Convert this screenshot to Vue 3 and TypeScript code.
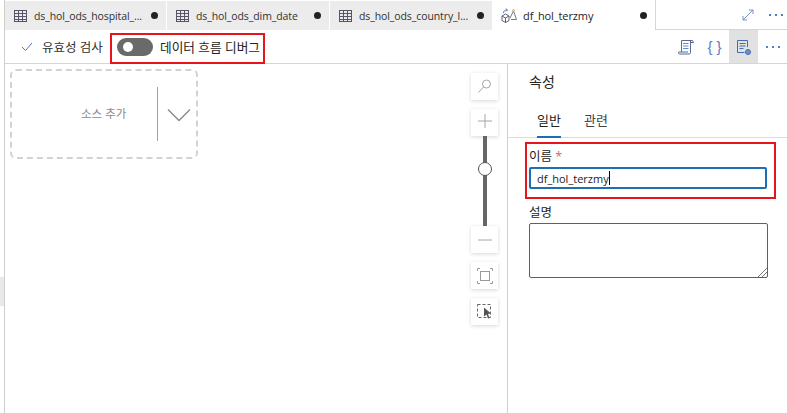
<script setup lang="ts">
const tabs = [
  { name: 'ds_hol_ods_hospital_...' },
  { name: 'ds_hol_ods_dim_date' },
  { name: 'ds_hol_ods_country_l...' },
]
</script>

<template>
  <div class="page">
    <div class="rail"><div class="rail-patch"></div></div>
    <div class="main">
      <div class="tabbar">
        <div v-for="t in tabs" :key="t.name" class="tab">
          <svg class="tab-ico" width="16" height="14" viewBox="0 0 16 14" fill="none" stroke="#55556a" stroke-width="1">
            <rect x="1.5" y="1.5" width="12" height="11" />
            <path d="M1.5 4.5h12M1.5 7.5h12M1.5 10.5h12M5.5 1.5v11M9.5 1.5v11" />
          </svg>
          <span class="tab-name">{{ t.name }}</span>
          <span class="dot"></span>
        </div>
        <div class="tab tab-active">
          <svg class="flow-ico" width="16" height="15" viewBox="0 0 16 15" fill="none" stroke="#5f5f6b" stroke-width="1">
            <path d="M1 8l3.500-2L8 8v4.500L4.500 14.500 1 12.500zM1 8l3.500 2L8 8M4.500 10v4.500" />
            <path d="M10 11.500h5.500L12.500 3 9 10" stroke="#6f7a8c" />
            <circle cx="12.500" cy="2.500" r="1" stroke="#c9a05a" />
            <path d="M2.500 5C2.500 3 4 2 6 2M5 .5L6.500 2 5 3.500" stroke="#4a78b8" />
          </svg>
          <span class="tab-name active-name">df_hol_terzmy</span>
          <span class="dot"></span>
        </div>
        <div class="tab-tools">
          <svg width="12" height="12" viewBox="0 0 12 12" fill="none" stroke="#7d8fc4" stroke-width="1">
            <path d="M1 11L11 1M7 1h4v4M1 7v4h4" />
          </svg>
          <span class="more">
            <i></i><i></i><i></i>
          </span>
        </div>
      </div>

      <div class="toolbar">
        <div class="validate">
          <svg width="12" height="10" viewBox="0 0 12 10" fill="none" stroke="#5470b4" stroke-width="1">
            <path d="M1 5l3.500 3.500L11 1" />
          </svg>
          <span>유효성 검사</span>
        </div>
        <div class="debug-box">
          <span class="switch"><span class="knob"></span></span>
          <span>데이터 흐름 디버그</span>
        </div>
        <div class="tool-right">
          <span class="tool">
            <svg width="16" height="16" viewBox="0 0 16 16" fill="none" stroke="#5a6b94" stroke-width="1">
              <path d="M3.500 13V1.500h11l1 2h-3" />
              <path d="M12.500 1.500V13.500a1.500 1.500 0 0 1-1.500 1.500H1.500c-.8 0-1.200-.8-1-2h9.500" />
              <path d="M5 4.500h5.500M5 7h5.500M5 9.500h5.500" stroke="#5b8fd0" />
            </svg>
          </span>
          <span class="tool braces">{ }</span>
          <span class="tool tool-on">
            <svg width="18" height="18" viewBox="0 0 18 18" fill="none" stroke="#3f6fb0" stroke-width="1">
              <path d="M12.500 9V2.500h-10v12h7" />
              <path d="M4.500 5.500h6M4.500 8h6M4.500 10.500h4" />
              <circle cx="13" cy="14" r="2.500" fill="#6d93c4" />
            </svg>
          </span>
          <span class="tool">
            <span class="more"><i></i><i></i><i></i></span>
          </span>
        </div>
      </div>

      <div class="content">
        <div class="canvas">
          <div class="source">
            <span class="source-label">소스 추가</span>
            <span class="source-sep"></span>
            <svg class="source-chev" width="24" height="14" viewBox="0 0 24 14" fill="none" stroke="#8a8a8a" stroke-width="1.400">
              <path d="M1 1.500l11 11 11-11" />
            </svg>
          </div>

          <div class="zoom">
            <span class="zbtn zbtn-search">
              <svg width="16" height="16" viewBox="0 0 16 16" fill="none" stroke="#a6a6a6" stroke-width="1">
                <circle cx="9.500" cy="6" r="4" />
                <path d="M6.500 9L1.500 14.500" />
              </svg>
            </span>
            <span class="zbtn zbtn-plus">
              <svg width="16" height="16" viewBox="0 0 16 16" fill="none" stroke="#a6a6a6" stroke-width="1">
                <path d="M1 8h14M8 1v14" />
              </svg>
            </span>
            <div class="track">
              <span class="thumb"></span>
            </div>
            <span class="zbtn">
              <svg width="16" height="16" viewBox="0 0 16 16" fill="none" stroke="#a6a6a6" stroke-width="1">
                <path d="M1 8h14" />
              </svg>
            </span>
            <span class="zbtn zbtn-gap">
              <svg width="16" height="16" viewBox="0 0 16 16" fill="none" stroke="#9a9a9a" stroke-width="1">
                <rect x="3.500" y="3.500" width="9" height="9" />
                <path d="M.5 3V.5H3M13 .5h2.500V3M15.500 13v2.500H13M3 15.500H.5V13" />
              </svg>
            </span>
            <span class="zbtn zbtn-gap">
              <svg width="16" height="16" viewBox="0 0 16 16" fill="none">
                <rect x=".5" y=".5" width="13" height="13" stroke="#666" stroke-dasharray="3 2" />
                <path d="M7 3.500l7 6-3 .5 1.500 4-1.500.5-1.500-4-2.500 2z" fill="#555" />
              </svg>
            </span>
          </div>
        </div>

        <aside class="panel">
          <h2 class="panel-title">속성</h2>
          <div class="panel-tabs">
            <span class="ptab ptab-on">일반</span>
            <span class="ptab">관련</span>
          </div>
          <div class="name-box">
            <label class="field-label">이름 <em>*</em></label>
            <div class="input"><span>df_hol_terzmy</span><i class="caret"></i></div>
          </div>
          <div class="desc">
            <label class="field-label">설명</label>
            <div class="textarea">
              <svg class="grip" width="9" height="9" viewBox="0 0 9 9" fill="none" stroke="#777" stroke-width="1">
                <path d="M0 9L9 0M4 9l5-5" />
              </svg>
            </div>
          </div>
        </aside>
      </div>
    </div>
  </div>
</template>

<style>
html, body { margin: 0; background: #fff; overflow: hidden; }
</style>

<style scoped>
.page {
  display: flex;
  width: 787px;
  height: 413px;
  overflow: hidden;
  background: #fff;
  color: #323130;
  font-family: "Open Sans", "Noto Sans CJK KR", sans-serif;
  font-size: 10.500px;
}
.rail {
  width: 4px;
  flex: none;
  border-right: 1px solid #cfcfcf;
  padding-top: 277px;
  box-sizing: content-box;
}
.rail-patch { height: 29px; background: #e8e8e8; }
.main { flex: 1; display: flex; flex-direction: column; min-width: 0; }

.tabbar { display: flex; height: 30px; flex: none; background: #fff; }
.tab {
  width: 162px;
  flex: none;
  height: 29px;
  margin-top: 1px;
  box-sizing: border-box;
  padding: 0 8px 0 8px;
  display: flex;
  align-items: center;
  background: #ececec;
  border-right: 1px solid #fff;
}
.tab + .tab { width: 163px; }
.tab-ico { flex: none; margin-right: 5px; }
.tab-name { flex: 1; white-space: nowrap; overflow: hidden; letter-spacing: -0.1px; }
.active-name { color: #252423; font-size: 11px; }
.dot { width: 7px; height: 7px; border-radius: 50%; background: #1f2228; flex: none; }
.tab-active {
  width: 163px;
  margin-top: 0;
  height: 30px;
  background: #fff;
  border-right: 1px solid #d6d6d6;
  padding: 0 8px 0 8px;
}
.flow-ico { flex: none; margin-right: 6px; }
.tab-tools {
  flex: 1;
  display: flex;
  align-items: center;
  justify-content: flex-end;
  gap: 15px;
  padding-right: 4px;
  border-bottom: 1px solid #d6d6d6;
  height: 29px;
  margin-top: 1px;
  box-sizing: border-box;
}
.more { display: inline-flex; gap: 4px; }
.more i { width: 2px; height: 2px; background: #4d7fc4; display: block; }

.toolbar {
  display: flex;
  align-items: flex-start;
  height: 34px;
  flex: none;
  box-sizing: border-box;
  border-bottom: 1px solid #d6d6d6;
}
.validate {
  display: flex;
  align-items: center;
  gap: 9px;
  padding-left: 16px;
  width: 105px;
  height: 33px;
  box-sizing: border-box;
  font-size: 12.500px;
}
.debug-box {
  display: flex;
  align-items: center;
  gap: 7px;
  width: 155px;
  height: 31px;
  margin-top: 3px;
  box-sizing: border-box;
  border: 2px solid #e8141c;
  padding: 0 0 4px 5px;
  font-size: 12.700px;
  color: #252423;
}
.switch {
  width: 36px;
  height: 18px;
  border-radius: 9px;
  background: #6a6a6a;
  flex: none;
  display: flex;
  align-items: center;
  padding-left: 6px;
  box-sizing: border-box;
}
.knob { width: 10px; height: 10px; border-radius: 50%; background: #fff; display: block; }
.tool-right { margin-left: auto; display: flex; height: 33px; }
.tool {
  width: 29px;
  height: 33px;
  display: flex;
  align-items: center;
  justify-content: center;
}
.tool-on { background: #e1e1e1; }
.braces { color: #5a7cc0; font-size: 15px; font-family: "Liberation Sans", sans-serif; }

.content { flex: 1; display: flex; min-height: 0; }
.canvas { width: 503px; flex: none; position: relative; box-sizing: border-box; border-right: 1px solid #d0d0d0; }
.source {
  position: absolute;
  left: 5px;
  top: 5px;
  width: 188px;
  height: 90px;
  box-sizing: border-box;
  border: 2px dashed #d2d2d2;
  border-radius: 6px;
  display: flex;
  align-items: center;
  padding-left: 69px;
}
.source-label {
  width: 46px;
  flex: none;
  white-space: nowrap;
  font-size: 11.500px;
  color: #8a8a8a;
  margin-right: 30px;
  margin-bottom: 2px;
}
.source-sep { width: 1px; height: 54px; background: #a0a0a0; flex: none; }
.source-chev { margin: 2px 0 0 9px; flex: none; }

.zoom {
  position: absolute;
  left: 466px;
  top: 9px;
  width: 27px;
  display: flex;
  flex-direction: column;
  align-items: center;
}
.zbtn {
  width: 27px;
  height: 27px;
  flex: none;
  box-sizing: border-box;
  background: #fff;
  box-shadow: 0 1px 4px rgba(0, 0, 0, 0.16);
  display: flex;
  align-items: center;
  justify-content: center;
}
.zbtn-search { padding-bottom: 2px; }
.zbtn-plus { margin-top: 9px; padding-bottom: 4px; }
.zbtn-gap { margin-top: 9px; }
.track {
  width: 4px;
  height: 90px;
  background: #666;
  position: relative;
  flex: none;
}
.thumb {
  position: absolute;
  left: -5px;
  top: 26px;
  width: 14px;
  height: 14px;
  box-sizing: border-box;
  border-radius: 50%;
  background: #fff;
  border: 1px solid #555;
}

.panel { flex: 1; min-width: 0; box-sizing: border-box; display: flex; flex-direction: column; }
.panel-title { margin: 9px 0 0 21px; font-size: 14px; font-weight: 400; line-height: 18px; color: #252423; }
.panel-tabs {
  margin-top: 11px;
  height: 36px;
  box-sizing: border-box;
  border-bottom: 1px solid #dcdcdc;
  display: flex;
  gap: 23px;
  padding-left: 29px;
}
.ptab { height: 35px; box-sizing: border-box; padding-top: 9px; font-size: 13px; color: #444; line-height: 18px; }
.ptab-on { border-bottom: 2px solid #1a6fb5; height: 36px; color: #252423; }
.name-box {
  margin: 4px 11px 0 17px;
  height: 57px;
  box-sizing: border-box;
  border: 2px solid #e8141c;
  padding: 4px 7px 0 2px;
}
.field-label { display: block; font-size: 12.500px; line-height: 17px; color: #252423; }
.field-label em { color: #d46a6a; font-style: normal; }
.input {
  margin-top: 2px;
  height: 22px;
  box-sizing: border-box;
  border: 2px solid #1a6fb5;
  border-radius: 2px;
  display: flex;
  align-items: center;
  padding-left: 6px;
  font-size: 11px;
  color: #252423;
}
.caret { display: block; width: 1px; height: 14px; background: #000; }
.desc { margin: 5px 19px 0 21px; }
.textarea {
  margin-top: 2px;
  height: 55px;
  box-sizing: border-box;
  border: 1px solid #606060;
  border-radius: 2px;
  position: relative;
}
.grip { position: absolute; right: 0; bottom: 0; }
</style>
